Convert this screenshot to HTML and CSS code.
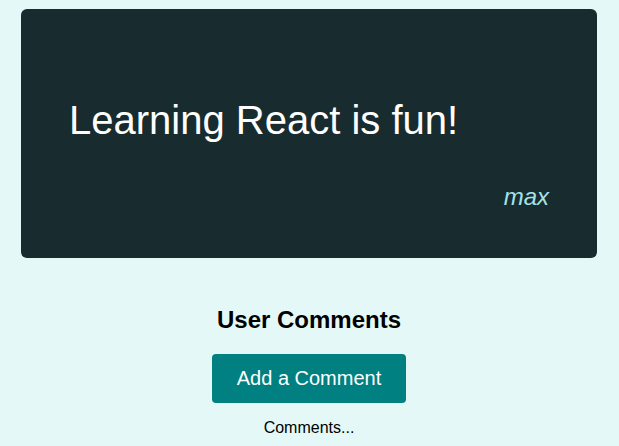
FILE: index.html
```html
<!DOCTYPE html>
<html>
<head>
<meta charset="utf-8">
<link rel="stylesheet" href="styles.css">
</head>
<body>
<main class="page">
  <figure class="quote-card">
    <blockquote class="quote-text">Learning React is fun!</blockquote>
    <figcaption class="quote-author">max</figcaption>
  </figure>
  <section class="comments">
    <h2 class="comments-title">User Comments</h2>
    <button class="comments-btn">Add a Comment</button>
    <p class="comments-loading">Comments...</p>
  </section>
</main>
</body>
</html>
```
FILE: styles.css
```css
html, body {
  margin: 0;
  padding: 0;
}
body {
  background: #e5f8f8;
  font-family: "Liberation Sans", Arial, sans-serif;
  color: #000;
}
.page {
  padding: 9px 22px 0 21px;
}
.quote-card {
  box-sizing: border-box;
  margin: 0;
  background: #182b2e;
  border-radius: 6px;
  padding: 48px;
  display: flex;
  flex-direction: column;
}
.quote-text {
  margin: 40px 0;
  font-size: 40px;
  color: #fff;
  line-height: 46px;
}
.quote-author {
  align-self: flex-end;
  font-style: italic;
  font-size: 24px;
  line-height: 27px;
  color: #a2e2ea;
}
.comments {
  display: flex;
  flex-direction: column;
  align-items: center;
}
.comments-title {
  margin: 48px 0 20px;
  font-size: 24px;
  line-height: 28px;
  font-weight: bold;
}
.comments-btn {
  font-family: inherit;
  font-size: 20px;
  color: #fff;
  background: #008080;
  border: none;
  border-radius: 4px;
  width: 194px;
  height: 49px;
  cursor: pointer;
}
.comments-loading {
  margin: 16px 0 0;
  font-size: 16px;
  line-height: 18px;
}
```
